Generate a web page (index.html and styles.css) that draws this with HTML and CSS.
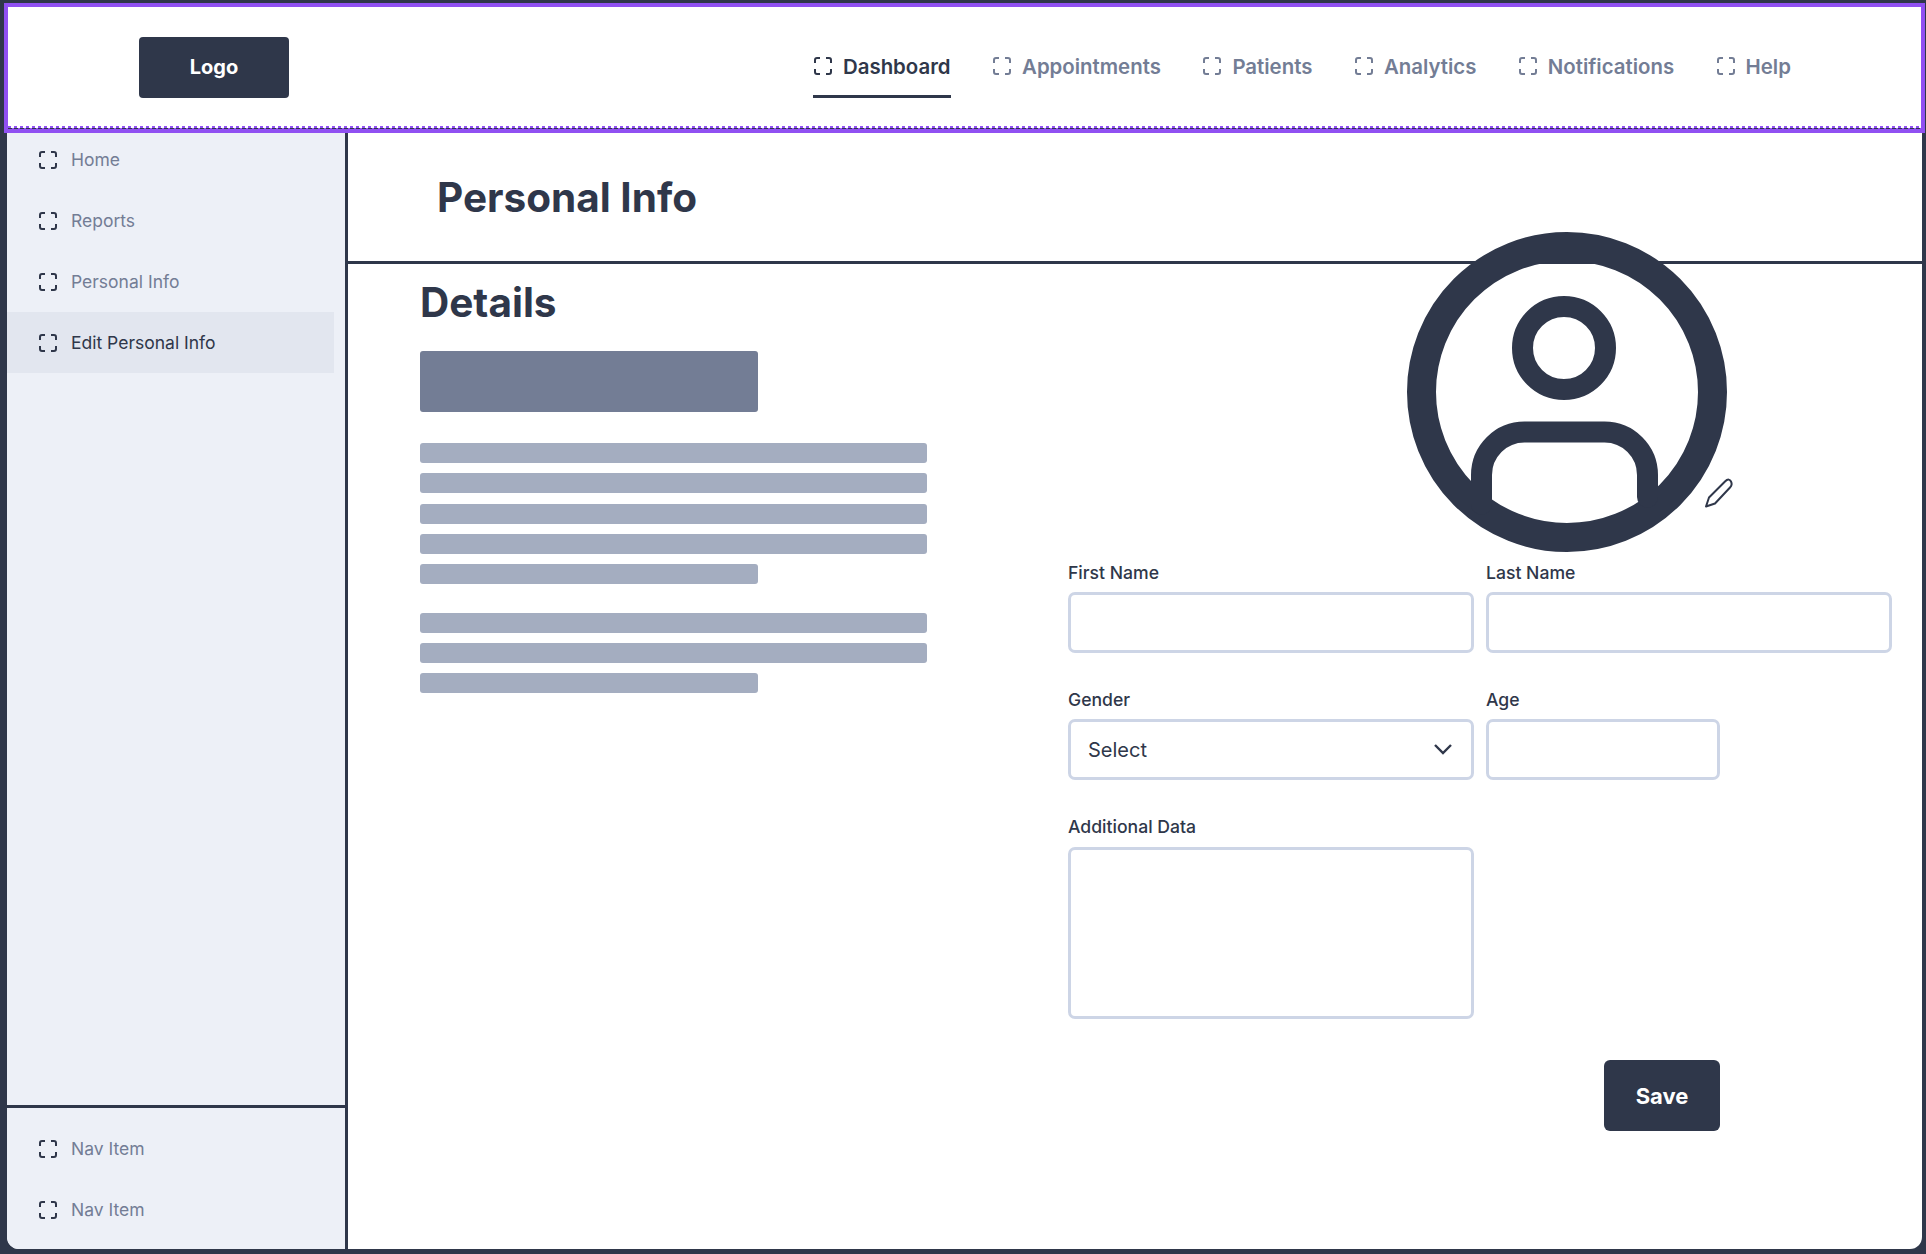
FILE: index.html
```html
<!DOCTYPE html>
<html lang="en">
<head>
    <meta charset="UTF-8">
    <meta name="viewport" content="width=device-width, initial-scale=1.0">
    <title>Edit Personal Info</title>

    <link rel="stylesheet" href="styles.css">
</head>
<body>
    <svg class="icon-defs" width="0" height="0">
        <symbol id="frame-icon" viewBox="0 0 18 18">
            <path d="M1 6V3a2 2 0 0 1 2-2h3M12 1h3a2 2 0 0 1 2 2v3M17 12v3a2 2 0 0 1-2 2h-3M6 17H3a2 2 0 0 1-2-2v-3" fill="none" stroke="currentColor" stroke-width="2"/>
        </symbol>
    </svg>

    <div class="frame">
        <header class="topbar">
            <div class="logo">Logo</div>
            <nav class="tabs">
                <a class="tab tab-active"><svg class="icon"><use href="#frame-icon"/></svg>Dashboard</a>
                <a class="tab"><svg class="icon"><use href="#frame-icon"/></svg>Appointments</a>
                <a class="tab"><svg class="icon"><use href="#frame-icon"/></svg>Patients</a>
                <a class="tab"><svg class="icon"><use href="#frame-icon"/></svg>Analytics</a>
                <a class="tab"><svg class="icon"><use href="#frame-icon"/></svg>Notifications</a>
                <a class="tab"><svg class="icon"><use href="#frame-icon"/></svg>Help</a>
            </nav>
        </header>

        <div class="content">
            <aside class="sidebar">
                <ul class="side-list">
                    <li class="side-item"><svg class="icon"><use href="#frame-icon"/></svg>Home</li>
                    <li class="side-item"><svg class="icon"><use href="#frame-icon"/></svg>Reports</li>
                    <li class="side-item"><svg class="icon"><use href="#frame-icon"/></svg>Personal Info</li>
                    <li class="side-item side-active"><svg class="icon"><use href="#frame-icon"/></svg>Edit Personal Info</li>
                </ul>
                <ul class="side-list side-bottom">
                    <li class="side-item"><svg class="icon"><use href="#frame-icon"/></svg>Nav Item</li>
                    <li class="side-item"><svg class="icon"><use href="#frame-icon"/></svg>Nav Item</li>
                </ul>
            </aside>

            <main class="panel">
                <div class="page-head">
                    <h1>Personal Info</h1>
                </div>
                <div class="page-body">
                    <section class="details">
                        <h2>Details</h2>
                        <div class="placeholder-block"></div>
                        <div class="lines">
                            <div class="line"></div>
                            <div class="line"></div>
                            <div class="line"></div>
                            <div class="line"></div>
                            <div class="line line-short"></div>
                        </div>
                        <div class="lines">
                            <div class="line"></div>
                            <div class="line"></div>
                            <div class="line line-short"></div>
                        </div>
                    </section>

                    <section class="profile">
                        <svg class="avatar" viewBox="0 0 330 320" width="330" height="320">
                            <g fill="none" stroke="#2f374a">
                                <circle cx="160" cy="160" r="145.5" stroke-width="29"/>
                                <circle cx="157" cy="116" r="41.5" stroke-width="21"/>
                                <path d="M74.5 272V243a43 43 0 0 1 43-43h80a43 43 0 0 1 43 43v22" stroke-width="21" stroke-linecap="round"/>
                                <path d="M299 274.500l3-9 16-16c3-3 5-2 6 0s1 4-1 6l-15 16z" stroke-width="2" stroke-linejoin="round"/>
                            </g>
                        </svg>

                        <form class="form-grid">
                            <div class="field">
                                <label for="firstName">First Name</label>
                                <input id="firstName" type="text">
                            </div>
                            <div class="field">
                                <label for="lastName">Last Name</label>
                                <input id="lastName" type="text">
                            </div>
                            <div class="field">
                                <label for="gender">Gender</label>
                                <div class="select-box">
                                    <select id="gender">
                                        <option>Select</option>
                                    </select>
                                    <svg class="chevron" viewBox="0 0 18 11" width="18" height="11">
                                        <path d="M1 1l8 8 8-8" fill="none" stroke="#2f374a" stroke-width="2.4"/>
                                    </svg>
                                </div>
                            </div>
                            <div class="field field-narrow">
                                <label for="age">Age</label>
                                <input id="age" type="text">
                            </div>
                            <div class="field">
                                <label for="additional">Additional Data</label>
                                <textarea id="additional"></textarea>
                            </div>
                            <div class="actions">
                                <button type="button" class="save">Save</button>
                            </div>
                        </form>
                    </section>
                </div>
            </main>
        </div>
    </div>
</body>
</html>
```

FILE: styles.css
```css
* {
    box-sizing: border-box;
}

body {
    margin: 0;
    height: 1254px;
    overflow: hidden;
    background-color: #2f374a;
    color: #2f374a;
    font-family: Inter, "Liberation Sans", sans-serif;
}

ul {
    list-style: none;
    margin: 0;
    padding: 0;
}

.icon-defs {
    position: absolute;
}

.icon {
    width: 18px;
    height: 18px;
    flex: none;
}

.frame {
    display: flex;
    flex-direction: column;
    height: 100%;
    padding: 3px 1px 5px 4px;
}

.topbar {
    position: relative;
    z-index: 1;
    display: flex;
    align-items: center;
    flex: none;
    height: 130px;
    padding: 0 0 2px 131px;
    background-color: #fff;
    border: 4px solid #9050f2;
}

/* dashed selection edge along the bottom of the bar */
.topbar::after {
    content: "";
    position: absolute;
    left: 0;
    right: 0;
    bottom: 0;
    height: 3px;
    background-image:
        repeating-linear-gradient(90deg, #2f374a 0 4px, #9050f2 4px 6px),
        repeating-linear-gradient(90deg, #9050f2 0 3px, #fff 3px 6px);
    background-size: 100% 1px, 100% 2px;
    background-position: 0 100%, 0 0;
    background-repeat: no-repeat;
}

.logo {
    display: flex;
    align-items: center;
    justify-content: center;
    width: 150px;
    height: 61px;
    background-color: #2f374a;
    color: #fff;
    border-radius: 4px;
    font-size: 20px;
    font-weight: 700;
}

.tabs {
    display: flex;
    gap: 41.5px;
    margin-left: 524px;
}

.tab {
    display: flex;
    align-items: center;
    gap: 11px;
    height: 61px;
    padding: 0 0 2px 1px;
    color: #737d95;
    font-size: 20.4px;
    font-weight: 600;
}

.tab-active {
    color: #2f374a;
    border-bottom: 3px solid #2f374a;
    padding: 1px 0 0 1px;
}

.content {
    display: flex;
    flex: 1;
    min-height: 0;
    margin: 0 3px;
    background-color: #fff;
    border-radius: 0 0 12px 12px;
    overflow: hidden;
}

.sidebar {
    display: flex;
    flex-direction: column;
    justify-content: space-between;
    flex: none;
    width: 341px;
    background-color: #edf0f7;
    border-right: 3px solid #2f374a;
}

.side-list {
    margin-top: -4px;
    padding-right: 11px;
}

.side-bottom {
    margin-top: 0;
    padding: 10px 0 9px;
    border-top: 3px solid #2f374a;
}

.side-item {
    display: flex;
    align-items: center;
    gap: 14px;
    height: 61px;
    padding-left: 32px;
    color: #737d95;
    font-size: 17.5px;
}

.side-item .icon {
    color: #2f374a;
}

.side-active {
    background-color: #e2e6ef;
    color: #2f374a;
}

.panel {
    flex: 1;
    min-width: 0;
}

.page-head {
    display: flex;
    align-items: center;
    height: 131px;
    padding-left: 89px;
    border-bottom: 3px solid #2f374a;
}

h1 {
    margin: 0;
    font-size: 40.5px;
    font-weight: 700;
}

.page-body {
    display: flex;
    padding-left: 72px;
}

.details {
    flex: none;
    width: 648px;
}

h2 {
    margin: 15px 0 24px;
    font-size: 40.5px;
    font-weight: 700;
    line-height: 48px;
}

.placeholder-block {
    width: 338px;
    height: 61px;
    background-color: #737d95;
    border-radius: 3px;
}

.lines {
    display: flex;
    flex-direction: column;
    gap: 10.25px;
    width: 507px;
    margin-top: 31px;
}

.lines + .lines {
    gap: 10px;
    margin-top: 29px;
}

.line {
    height: 20px;
    background-color: #a4adc0;
    border-radius: 3px;
}

.line-short {
    width: 338px;
}

.profile {
    flex: none;
    width: 823px;
}

.avatar {
    display: block;
    margin: -32px 0 11px 339px;
}

.form-grid {
    display: grid;
    grid-template-columns: 406px 406px;
    column-gap: 12px;
    row-gap: 37px;
}

.field label {
    display: block;
    height: 20px;
    margin-bottom: 9px;
    font-size: 17.6px;
    font-weight: 550;
    line-height: 20px;
}

.field input,
.field select,
.field textarea {
    display: block;
    width: 100%;
    height: 61px;
    padding: 0 17px;
    background-color: #fff;
    border: 3px solid #cdd5e6;
    border-radius: 7px;
    color: #2f374a;
    font-family: inherit;
    font-size: 20px;
}

.field select {
    appearance: none;
}

.field textarea {
    height: 172px;
    margin-top: 10px;
    resize: none;
}

.field-narrow input {
    width: 234px;
}

.select-box {
    position: relative;
}

.chevron {
    position: absolute;
    top: 25px;
    right: 22px;
}

.actions {
    display: flex;
    justify-content: flex-end;
    align-self: end;
    width: 234px;
    margin-bottom: -112px;
}

.save {
    width: 116px;
    height: 71px;
    background-color: #2f374a;
    color: #fff;
    border: none;
    border-radius: 6px;
    font-family: inherit;
    font-size: 22px;
    font-weight: 700;
}
```
